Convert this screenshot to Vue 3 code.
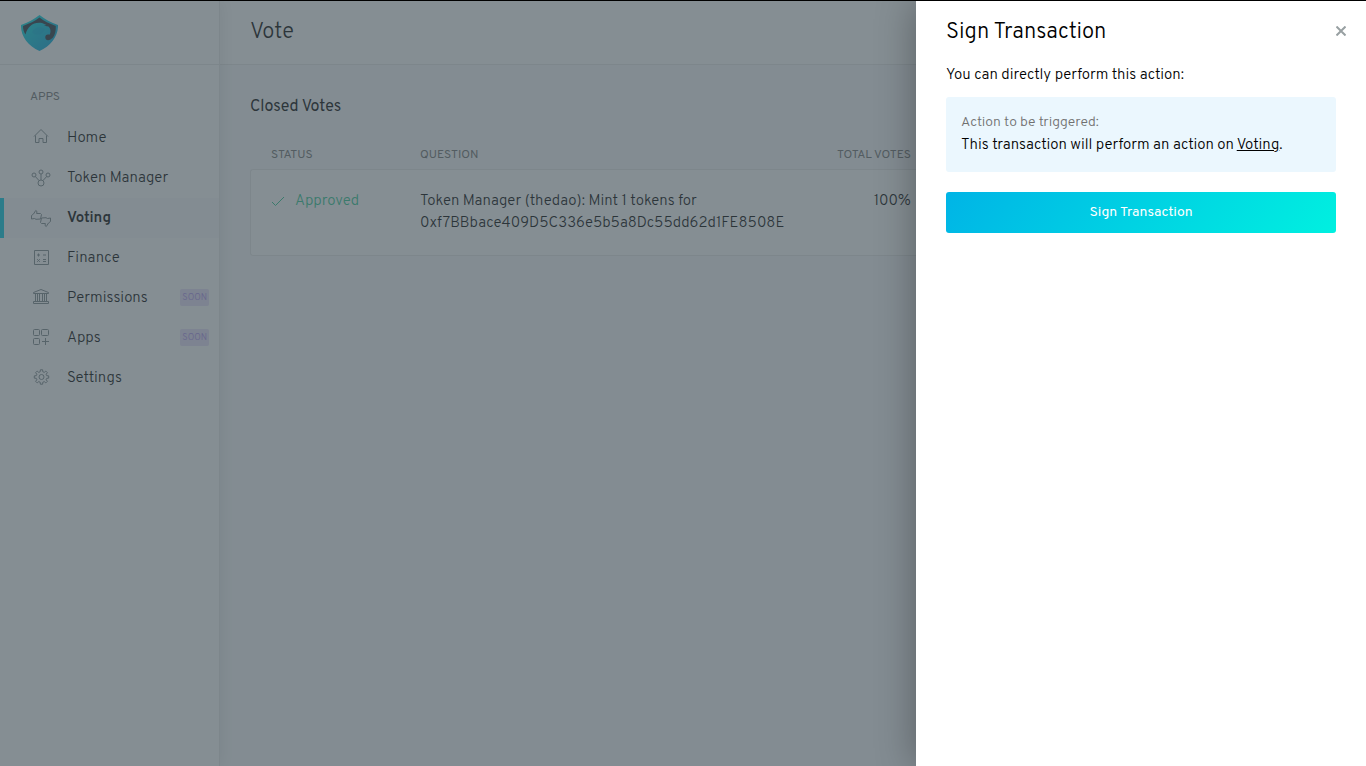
<script setup>
const apps = [
  { name: 'Home', icon: 'home' },
  { name: 'Token Manager', icon: 'tokens' },
  { name: 'Voting', icon: 'voting', active: true },
  { name: 'Finance', icon: 'finance' },
  { name: 'Permissions', icon: 'permissions', soon: true },
  { name: 'Apps', icon: 'apps', soon: true },
  { name: 'Settings', icon: 'settings' },
]

const votes = [
  {
    status: 'Approved',
    question: ['Token Manager (thedao): Mint 1 tokens for', '0xf7BBbace409D5C336e5b5a8Dc55dd62d1FE8508E'],
    total: '100%',
  },
]

// Gear outline: eight teeth around the centre of a 22x22 box
const gear = (() => {
  const points = []
  for (let i = 0; i < 8; i++) {
    const offsets = [[-14, 5.4], [-9, 7.3], [9, 7.3], [14, 5.4]]
    for (const [deg, r] of offsets) {
      const a = ((i * 45 + deg) * Math.PI) / 180
      points.push(`${(11.5 + r * Math.sin(a)).toFixed(2)} ${(10 - r * Math.cos(a)).toFixed(2)}`)
    }
  }
  return `M${points.join('L')}Z`
})()
</script>

<template>
  <div class="window">
    <aside class="sidebar">
      <div class="brand">
        <a href="#" aria-label="Home page">
          <svg class="logo" width="38" height="38" viewBox="0 0 38 38" aria-hidden="true">
            <defs>
              <linearGradient id="shield" x1="0" y1="0" x2="1" y2="1">
                <stop offset="0" stop-color="#00e5e0" />
                <stop offset="1" stop-color="#009cdc" />
              </linearGradient>
            </defs>
            <path d="M19.500 1C25 5.500 31 8.500 38 11C38.500 22 31 32 19.500 37C8 32 0.500 22 1 11C8 8.500 14 5.500 19.500 1Z" fill="url(#shield)" />
            <path d="M19.500 3.500C24 7 29 9.500 35.800 12C36 17 35 20.500 33 23.500L30.500 25.500C27.500 27.500 24.800 25.500 25.300 22.800C25.800 20.500 27.500 20 29.500 20.800C31 18.500 31 15 28.500 12.500L24 11.800L26.500 11L22 9C13.500 7.500 7.500 12.500 5.500 20.500C3.800 17.500 3 15.500 3 12C9.500 9.500 15 7 19.500 3.500Z" fill="#26313d" />
            <path d="M12 18C14 13 21 12 25 15C23 21 16 23 12 18Z" fill="#00a8dc" opacity=".4" />
          </svg>
        </a>
      </div>
      <h2 class="apps-title">APPS</h2>
      <nav>
        <a v-for="app in apps" :key="app.name" href="#" class="nav-item" :class="{ active: app.active }">
          <svg class="icon" width="22" height="22" viewBox="0 0 22 22" aria-hidden="true">
            <path v-if="app.icon === 'home'" d="M4 9.500L11 2.500L18 9.500M5.500 8.500V15.500H9V11.500H13V15.500H16.500V8.500" />
            <g v-else-if="app.icon === 'tokens'">
              <circle cx="4" cy="8" r="2" /><circle cx="11" cy="5" r="2" /><circle cx="18" cy="8" r="2" />
              <circle cx="11" cy="16" r="3" />
              <path d="M11 7V13M5.300 9.500L9 13.500M16.700 9.500L13 13.500" />
            </g>
            <g v-else-if="app.icon === 'voting'">
              <path d="M1.500 8.500L3.500 7L5.700 3.500L7 4.500L6.600 6.500H10.500L11.500 7.500L10.500 12L6 12.300L4.500 11.500L1.500 12Z" />
              <path d="M20.500 14.500L18.500 16L16.300 19.500L15 18.500L15.400 16.500H11.500L10.500 15.500L11.500 11L16 10.700L17.500 11.500L20.500 11Z" />
            </g>
            <path v-else-if="app.icon === 'finance'" d="M4.500 3.500H18.500V17.500H4.500ZM7 8H10M8.500 6.500V9.500M13 8H16M7.200 12.200L9.800 14.800M9.800 12.200L7.200 14.800M13 12.500H16M13 14.500H16" />
            <path v-else-if="app.icon === 'permissions'" d="M3.500 6.500V5.500L11 2.500L18.500 5.500V6.500ZM5.500 6.500V14.500M7.500 6.500V14.500M9.500 6.500V14.500M12.500 6.500V14.500M14.500 6.500V14.500M16.500 6.500V14.500M3.500 14.500H18.500V16.500H3.500Z" />
            <g v-else-if="app.icon === 'apps'">
              <rect x="3.500" y="2.500" width="6" height="6" rx="1" />
              <rect x="11.500" y="2.500" width="7" height="6" rx="1" />
              <rect x="3.500" y="11.500" width="6" height="6" rx="1" />
              <path d="M12 14.500H19M15.500 11V18" />
            </g>
            <g v-else>
              <path :d="gear" stroke-linejoin="round" />
              <circle cx="11.500" cy="10" r="2.500" />
            </g>
          </svg>
          <span class="nav-name">{{ app.name }}</span>
          <span v-if="app.soon" class="badge">SOON</span>
        </a>
      </nav>
    </aside>

    <main class="main">
      <header class="app-bar"><h1>Vote</h1></header>
      <section class="content">
        <h2 class="section-title">Closed Votes</h2>
        <table class="votes">
          <colgroup><col class="col-status"><col><col class="col-total"><col class="col-rest"></colgroup>
          <thead>
            <tr><th scope="col">STATUS</th><th scope="col">QUESTION</th><th scope="col" class="total">TOTAL VOTES</th><td></td></tr>
          </thead>
          <tbody>
            <tr v-for="vote in votes" :key="vote.question[1]">
              <td>
                <span class="approved">
                  <svg width="14" height="12" viewBox="0 0 14 12" aria-hidden="true"><path d="M1 6L4.500 9.500L13 1" /></svg>
                  {{ vote.status }}
                </span>
              </td>
              <td class="question">{{ vote.question[0] }}<br>{{ vote.question[1] }}</td>
              <td class="total">{{ vote.total }}</td>
              <td></td>
            </tr>
          </tbody>
        </table>
      </section>
    </main>

    <div class="overlay"></div>

    <aside class="panel" role="dialog" aria-labelledby="panel-title">
      <header class="panel-header">
        <h1 id="panel-title">Sign Transaction</h1>
        <button type="button" class="close" aria-label="Close">
          <svg width="10" height="10" viewBox="0 0 10 10" aria-hidden="true"><path d="M0.500 0.500L9.500 9.500M9.500 0.500L0.500 9.500" /></svg>
        </button>
      </header>
      <p class="intro">You can directly perform this action:</p>
      <div class="info">
        <p class="info-title">Action to be triggered:</p>
        <p>This transaction will perform an action on <a href="#">Voting</a>.</p>
      </div>
      <button type="button" class="sign">Sign Transaction</button>
    </aside>
  </div>
</template>

<style>
body { margin: 0; }
</style>

<style scoped>
* { box-sizing: border-box; }
h1, h2, p { margin: 0; font-weight: inherit; }
.window {
  position: relative;
  display: flex;
  min-height: 100vh;
  overflow: hidden;
  border-top: 1px solid #000;
  background: #f9fafc;
  color: #000;
  font-family: Overpass, Roboto, "Liberation Sans", sans-serif;
  font-size: 15px;
  font-weight: 300;
  line-height: 22px;
}
.sidebar {
  flex: none;
  width: 220px;
  background: #fff;
  border-right: 1px solid #e8e8e8;
  box-shadow: 1px 0 15px rgba(0, 0, 0, 0.1);
  z-index: 1;
}
.brand {
  height: 64px;
  padding: 13px 20px;
  border-bottom: 1px solid #e8e8e8;
}
.logo { display: block; }
.apps-title {
  padding: 21px 30px 10px;
  color: #707070;
  font-size: 12px;
  font-weight: 400;
}
.nav-item {
  display: flex;
  align-items: center;
  height: 40px;
  padding: 0 10px 0 30px;
  color: #000;
  text-decoration: none;
}
.nav-item.active {
  background: #f9fafc;
  box-shadow: inset 4px 0 0 #00cbe6;
  font-weight: 600;
}
.icon {
  flex: none;
  margin-right: 15px;
  fill: none;
  stroke: #7c868b;
}
.nav-name { flex: 1; padding-top: 2px; }
.badge {
  margin-bottom: 1px;
  padding: 1px 2px 0;
  border-radius: 2px;
  background: #e8def8;
  color: #a98ceb;
  font-size: 9px;
  line-height: 16px;
}
.main { flex: 1; min-width: 0; }
.app-bar {
  height: 64px;
  padding: 20px 30px;
  border-bottom: 1px solid #e8e8e8;
  background: #fff;
}
h1 { font-size: 22px; line-height: 24px; }
.content { padding: 31px 30px; }
.section-title {
  margin-bottom: 26px;
  font-size: 16px;
  font-weight: 400;
}
.votes {
  width: 100%;
  table-layout: fixed;
  border-spacing: 0;
  text-align: left;
}
.col-status { width: 170px; }
.col-total { width: 100px; }
.col-rest { width: 425px; }
th {
  padding: 0 0 3px;
  color: #707070;
  font-size: 12px;
  font-weight: 400;
}
th:first-child { padding-left: 21px; }
.votes .total { text-align: right; }
tbody td {
  height: 87px;
  padding: 21px 0 20px;
  vertical-align: top;
  background: #fff;
  border: 1px solid #e8e8e8;
  border-width: 1px 0;
}
tbody td:first-child {
  padding-left: 20px;
  border-left-width: 1px;
  border-radius: 3px 0 0 3px;
}
tbody td:last-child {
  border-right-width: 1px;
  border-radius: 0 3px 3px 0;
}
.approved {
  display: flex;
  align-items: center;
  gap: 10px;
  color: #2cc68f;
}
.approved svg { fill: none; stroke: currentColor; }
.overlay {
  position: absolute;
  inset: 0;
  z-index: 2;
  background: rgba(68, 81, 89, 0.65);
}
.panel {
  position: absolute;
  top: 0;
  right: 0;
  bottom: 0;
  z-index: 3;
  width: 450px;
  padding: 20px 30px;
  background: #fff;
  box-shadow: -2px 0 36px rgba(0, 0, 0, 0.3);
}
.panel-header {
  display: flex;
  align-items: center;
  justify-content: space-between;
  margin: 0 -20px 20px 0;
}
.close {
  display: flex;
  padding: 10px;
  margin: -12px 0 -8px;
  border: 0;
  background: none;
  cursor: pointer;
}
.close svg { fill: none; stroke: #98a0a2; stroke-width: 2; }
.intro { margin-bottom: 10px; }
.info {
  margin-bottom: 20px;
  padding: 15px;
  border-radius: 3px;
  background: #ebf7fe;
}
.info-title { margin-bottom: 1px; color: #707070; font-size: 14px; }
.info a { color: inherit; }
.sign {
  display: block;
  width: 100%;
  height: 41px;
  border: 0;
  border-radius: 3px;
  background: linear-gradient(130deg, #00b4e6, #00f0e0);
  color: #fff;
  font-family: inherit;
  font-size: 14px;
  font-weight: 400;
  cursor: pointer;
}
</style>
